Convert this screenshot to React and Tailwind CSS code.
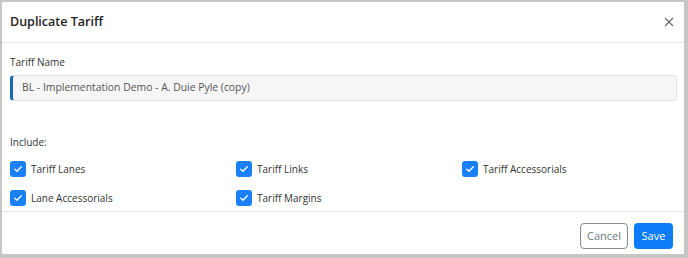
import React from "react";

function Check() {
  return (
    <span className="w-[16px] h-[16px] rounded-[3px] bg-[#1a80f8] flex items-center justify-center shrink-0">
      <svg width="10" height="10" viewBox="0 0 10 10" fill="none">
        <path d="M1.8 5.2 L4 7.3 L8.3 2.7" stroke="white" strokeWidth="1.3" strokeLinecap="round" strokeLinejoin="round" />
      </svg>
    </span>
  );
}

function Item({ label }) {
  return (
    <div className="flex items-center gap-[5px]">
      <Check />
      <span className="text-[10px] text-[#333]">{label}</span>
    </div>
  );
}

export default function App() {
  return (
    <div
      className="w-[688px] h-[258px] bg-[#c6c6c6] pt-[2px] pl-[2px] pr-[4px] pb-[4px]"
      style={{ fontFamily: '"Open Sans", sans-serif' }}
    >
      <div className="bg-white h-full flex flex-col">
        <div className="h-[41px] border-b border-[#e6e6e6] flex items-center justify-between pl-[8px] pr-[10px]">
          <span className="text-[12.5px] font-semibold text-[#222]">Duplicate Tariff</span>
          <svg width="10" height="10" viewBox="0 0 10 10" className="mt-[-1px]">
            <path d="M1 1 L9 9 M9 1 L1 9" stroke="#666" strokeWidth="1.1" />
          </svg>
        </div>
        <div className="flex-1 flex flex-col pl-[8px] pr-[7px]">
          <div className="mt-[11px] text-[10px] leading-[16px] text-[#333]">Tariff Name</div>
          <div className="mt-[5px] h-[26px] rounded-[4px] border border-[#e0e0e0] border-l-[3px] border-l-[#1569b8] bg-[#f6f6f6] flex items-center pl-[9px] text-[10.4px] text-[#555]">
            BL - Implementation Demo - A. Duie Pyle (copy)
          </div>
          <div className="mt-[33px] text-[10px] leading-[16px] text-[#333]">Include:</div>
          <div className="mt-[11px] grid grid-cols-3 gap-x-[11px] gap-y-[13px]">
            <Item label="Tariff Lanes" />
            <Item label="Tariff Links" />
            <Item label="Tariff Accessorials" />
            <Item label="Lane Accessorials" />
            <Item label="Tariff Margins" />
          </div>
        </div>
        <div className="h-[43px] border-t border-[#e6e6e6] flex items-start justify-end gap-[6px] pt-[11px] pr-[11px]">
          <button className="h-[26px] w-[48px] rounded-[4px] border border-[#8a8a8a] text-[11px] text-[#6c757d] bg-white">Cancel</button>
          <button className="h-[26px] w-[39px] rounded-[4px] bg-[#0c7cf8] text-[11px] text-white">Save</button>
        </div>
      </div>
    </div>
  );
}
